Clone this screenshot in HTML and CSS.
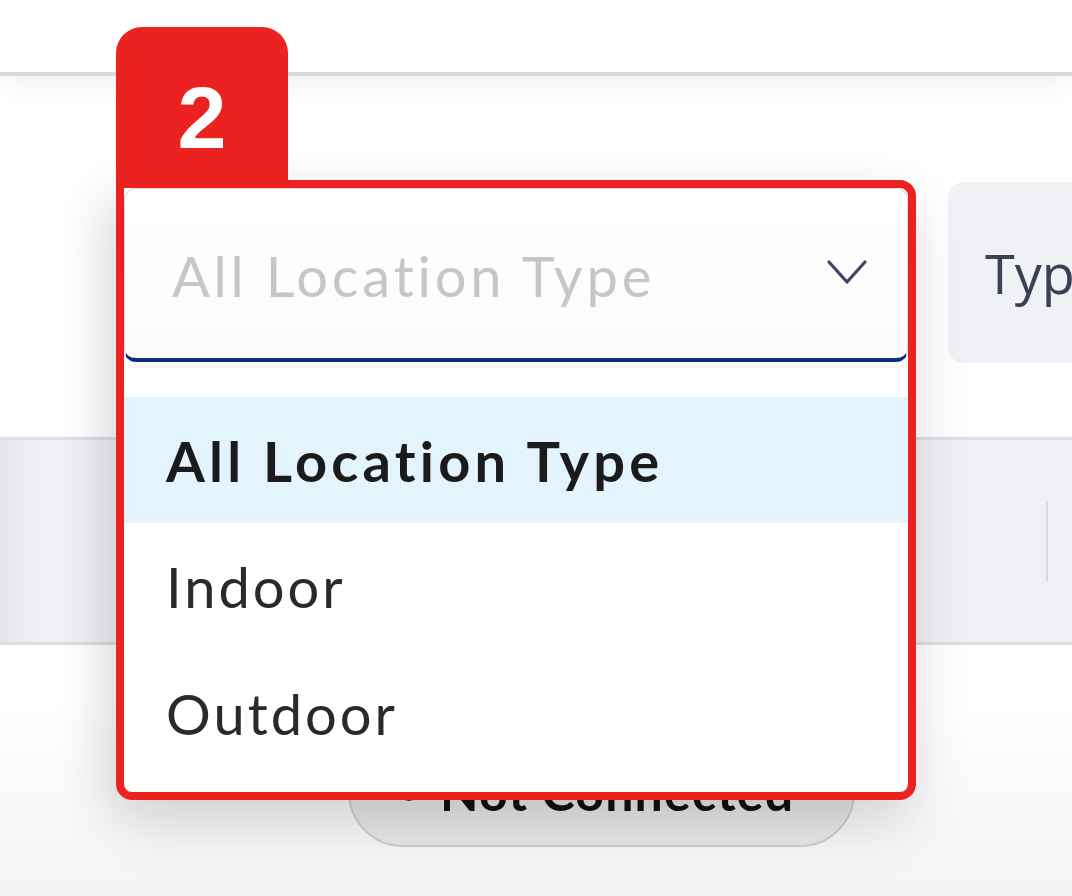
FILE: index.html
```html
<!DOCTYPE html>
<html lang="en">
<head>
<meta charset="utf-8">
<title>Location Type filter</title>
<link rel="stylesheet" href="styles.css">
</head>
<body>
  <header class="topbar"></header>

  <section class="filters">
    <div class="select-wrap">
      <div class="select">
        <span class="placeholder">All Location Type</span>
        <svg class="chevron" width="44" height="32" viewBox="0 0 44 32" aria-hidden="true">
          <path d="M4 6 L22 26 L40 6" fill="none" stroke="#3d4466" stroke-width="3.2" stroke-linecap="round" stroke-linejoin="round"/>
        </svg>
      </div>
      <ul class="menu">
        <li class="option active">All Location Type</li>
        <li class="option">Indoor</li>
        <li class="option">Outdoor</li>
      </ul>
      <div class="annot-frame"></div>
      <div class="annot-badge">2</div>
    </div>
    <div class="type-box"><span>Type</span></div>
  </section>

  <section class="table-head">
    <div class="th-sep"></div>
  </section>

  <section class="row">
    <div class="pill"><span class="dot"></span><span class="pill-text">Not Connected</span></div>
  </section>
</body>
</html>
```

FILE: styles.css
```css
* { box-sizing: border-box; }
html, body { margin: 0; padding: 0; }
body {
  width: 1072px;
  height: 896px;
  overflow: hidden;
  background: linear-gradient(#ffffff 0, #ffffff 700px, #f3f3f3 896px);
  font-family: "Lato", "Open Sans", sans-serif;
}

.topbar {
  height: 76px;
  border-bottom: 4px solid #d6d8dd;
  box-shadow: 0 8px 24px rgba(60, 70, 90, 0.07);
  background: #fff;
}

.filters {
  display: flex;
  align-items: flex-start;
  gap: 40px;
  padding-left: 124px;
  margin-top: 106px;
  height: 181px;
}

.select-wrap {
  position: relative;
  width: 784px;
  flex-shrink: 0;
  margin-top: 6px;
  z-index: 5;
}

.select {
  height: 174px;
  background: linear-gradient(#ffffff, #fbfbfb);
  border: 1.5px solid #cfd6e4;
  border-bottom: 4px solid #0c2d80;
  border-radius: 12px;
  display: flex;
  align-items: center;
  justify-content: space-between;
  padding: 0 38px 0 47px;
}

.placeholder {
  font-size: 56px;
  color: #c6c6c6;
  letter-spacing: 3.8px;
  padding-top: 4px;
}

.chevron { display: block; margin-top: -4px; }

.menu {
  list-style: none;
  margin: 0;
  padding: 29px 0 15px;
  position: absolute;
  top: 180px;
  left: 0;
  width: 100%;
  background: #fff;
  box-shadow: 0 -4px 8px rgba(0,0,0,0.04);
}

.option {
  height: 127px;
  display: flex;
  align-items: center;
  padding-left: 42px;
  font-size: 56px;
  color: #2a2a2a;
  letter-spacing: 3px;
}

.option.active {
  background: #e3f4fd;
  font-weight: 700;
  color: #1b1b1b;
  height: 126px;
  letter-spacing: 4.2px;
}

.annot-frame {
  position: absolute;
  top: -8px;
  left: -8px;
  width: 800px;
  height: 620px;
  border: 8px solid #ec2220;
  border-radius: 0 16px 16px 16px;
  box-shadow: 0 24px 60px rgba(0, 0, 0, 0.12), -20px 10px 50px rgba(0,0,0,0.06);
  pointer-events: none;
}

.annot-badge {
  position: absolute;
  left: -8px;
  top: -161px;
  width: 172px;
  height: 160px;
  background: #ec2220;
  border-radius: 26px 26px 0 0;
  color: #fff;
  font-family: "Liberation Sans", Arial, sans-serif;
  font-weight: 700;
  font-size: 88px;
  line-height: 1;
  display: flex;
  justify-content: center;
  padding-top: 47px;
}

.type-box {
  width: 200px;
  height: 181px;
  background: #f0f1f5;
  border-radius: 16px;
  display: flex;
  align-items: center;
  padding-left: 37px;
  flex-shrink: 0;
}

.type-box span {
  font-family: "Open Sans", sans-serif;
  font-size: 54px;
  color: #3b4052;
}

.table-head {
  margin-top: 74px;
  height: 208px;
  background: linear-gradient(90deg, #e4e6eb 0, #eef0f4 40px, #eef0f4 100%);
  border-top: 3px solid #dcdee5;
  border-bottom: 3px solid #dcdee5;
  display: flex;
  align-items: center;
  justify-content: flex-end;
  padding-right: 24px;
}

.th-sep {
  width: 2px;
  height: 80px;
  background: #d6d8de;
}

.row {
  padding-left: 348px;
  margin-top: 92px;
}

.pill {
  width: 507px;
  height: 110px;
  border: 2px solid #cfcfcf;
  border-radius: 55px;
  background: #e7e7e7;
  display: flex;
  align-items: center;
  padding-left: 50px;
  gap: 22px;
}

.dot {
  width: 18px;
  height: 18px;
  border-radius: 50%;
  background: #2e3566;
}

.pill-text {
  font-size: 50px;
  font-weight: 700;
  color: #111;
  letter-spacing: 1.2px;
}
```
